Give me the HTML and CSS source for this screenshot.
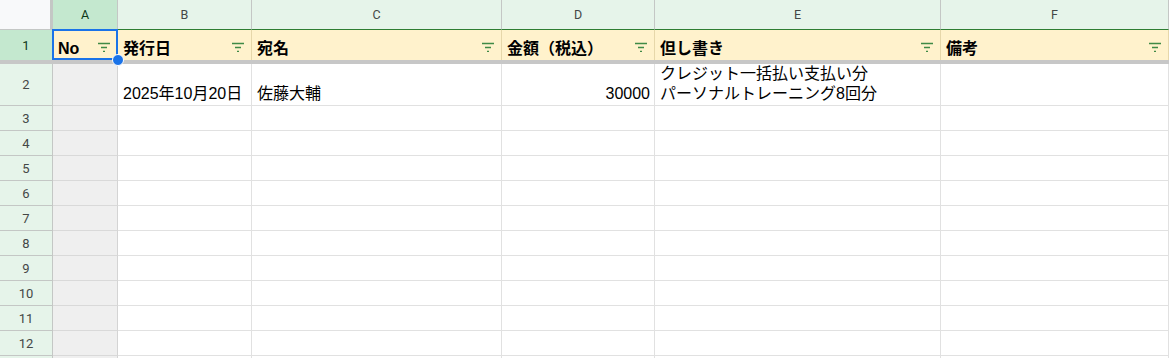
FILE: index.html
```html
<!DOCTYPE html>
<html lang="ja">
<head>
    <meta charset="UTF-8">
    <meta name="viewport" content="width=device-width, initial-scale=1.0">
    <title>領収書リスト</title>
    <link rel="stylesheet" href="styles.css">
</head>
<body>
    <div class="sheet">
        <!-- 列見出し -->
        <div class="corner"></div>
        <div class="col-head selected">A</div>
        <div class="col-head">B</div>
        <div class="col-head">C</div>
        <div class="col-head">D</div>
        <div class="col-head">E</div>
        <div class="col-head">F</div>

        <!-- 1行目: 見出し行（フィルタ付き） -->
        <div class="row-head selected">1</div>
        <div class="title-cell">No <svg class="filter" viewBox="0 0 12 10"><rect x="0" y="0.75" width="12" height="1.5"/><rect x="3" y="4.75" width="6" height="1.5"/><rect x="5" y="8.75" width="2" height="1.5"/></svg></div>
        <div class="title-cell">発行日 <svg class="filter" viewBox="0 0 12 10"><rect x="0" y="0.75" width="12" height="1.5"/><rect x="3" y="4.75" width="6" height="1.5"/><rect x="5" y="8.75" width="2" height="1.5"/></svg></div>
        <div class="title-cell">宛名 <svg class="filter" viewBox="0 0 12 10"><rect x="0" y="0.75" width="12" height="1.5"/><rect x="3" y="4.75" width="6" height="1.5"/><rect x="5" y="8.75" width="2" height="1.5"/></svg></div>
        <div class="title-cell">金額（税込） <svg class="filter" viewBox="0 0 12 10"><rect x="0" y="0.75" width="12" height="1.5"/><rect x="3" y="4.75" width="6" height="1.5"/><rect x="5" y="8.75" width="2" height="1.5"/></svg></div>
        <div class="title-cell">但し書き <svg class="filter" viewBox="0 0 12 10"><rect x="0" y="0.75" width="12" height="1.5"/><rect x="3" y="4.75" width="6" height="1.5"/><rect x="5" y="8.75" width="2" height="1.5"/></svg></div>
        <div class="title-cell">備考 <svg class="filter" viewBox="0 0 12 10"><rect x="0" y="0.75" width="12" height="1.5"/><rect x="3" y="4.75" width="6" height="1.5"/><rect x="5" y="8.75" width="2" height="1.5"/></svg></div>

        <!-- 固定行の区切り -->
        <div class="freeze-bar"></div>

        <!-- 2行目: データ -->
        <div class="row-head">2</div>
        <div class="cell grey"></div>
        <div class="cell">2025年10月20日</div>
        <div class="cell">佐藤大輔</div>
        <div class="cell num">30000</div>
        <div class="cell">クレジット一括払い支払い分<br>パーソナルトレーニング8回分</div>
        <div class="cell"></div>
    </div>

    <!-- 選択中のセル A1 -->
    <div class="selection"><span class="handle"></span></div>

    <script>
        // 空の行 3〜12 と、画面下で切れる13行目を作る
        const sheet = document.querySelector('.sheet');
        for (let r = 3; r <= 13; r++) {
            let html = '<div class="row-head">' + (r < 13 ? r : '') + '</div><div class="cell grey"></div>';
            for (let c = 0; c < 5; c++) {
                html += '<div class="cell"></div>';
            }
            sheet.insertAdjacentHTML('beforeend', html);
        }
    </script>
</body>
</html>
```

FILE: styles.css
```css
body {
    margin: 0;
    background-color: #ffffff;
    overflow: hidden;
    font-family: "Liberation Sans", Arial, "Noto Sans CJK JP", sans-serif;
}

.sheet {
    display: grid;
    grid-template-columns: 53px 65px 134px 250px 153px 286px 1fr;
    grid-template-rows: 30px 30px 4px 42px;
    grid-auto-rows: 25px;
    height: 100vh;
    overflow: hidden;
}

.sheet > div {
    box-sizing: border-box;
}

/* 列見出し */
.corner {
    background-color: #f8f9fa;
    border-right: 3px solid #c4c7c5;
    border-bottom: 1px solid #c4c7c5;
}

.col-head {
    display: flex;
    justify-content: center;
    align-items: center;
    font-family: Roboto, "Liberation Sans", sans-serif;
    font-size: 12.5px;
    color: #444746;
    background-color: #e6f4ea;
    border-right: 1px solid #c4c7c5;
    border-bottom: 1px solid #2e7d32;
}

.col-head.selected {
    background-color: #c4e8cf;
    color: #0d3818;
}

/* 行見出し */
.row-head {
    display: flex;
    justify-content: center;
    align-items: center;
    font-family: Roboto, "Liberation Sans", sans-serif;
    font-size: 13px;
    color: #444746;
    background-color: #e6f4ea;
    border-right: 1px solid #c4c7c5;
    border-bottom: 1px solid #c4c7c5;
}

.row-head.selected {
    background-color: #c4e8cf;
    color: #0d3818;
    border-bottom: none;
}

/* 見出し行のセル */
.title-cell {
    display: flex;
    justify-content: space-between;
    align-items: flex-end;
    padding: 0 7px 1px 5px;
    font-size: 16px;
    line-height: 20px;
    font-weight: bold;
    color: #000000;
    background-color: #fff2cc;
    border-right: 1px solid #e6d7aa;
    white-space: nowrap;
}

.filter {
    width: 12px;
    height: 10px;
    margin-bottom: 7px;
    fill: #3f8a46;
    flex-shrink: 0;
}

.freeze-bar {
    grid-column: 1 / -1;
    background-color: #c7c7c7;
}

/* 通常のセル */
.cell {
    display: flex;
    align-items: flex-end;
    padding: 0 4px 1px 5px;
    font-size: 16px;
    line-height: 20px;
    color: #000000;
    border-right: 1px solid #e1e1e1;
    border-bottom: 1px solid #e1e1e1;
    white-space: nowrap;
}

.cell.grey {
    background-color: #efefef;
    border-right-color: #d4d4d4;
    border-bottom-color: #d9d9d9;
}

.cell.num {
    justify-content: flex-end;
}

/* 選択枠 */
.selection {
    position: absolute;
    left: 52px;
    top: 29px;
    width: 62px;
    height: 27px;
    border: 2px solid #1a73e8;
}

.handle {
    position: absolute;
    right: -8px;
    bottom: -8px;
    width: 10px;
    height: 10px;
    border-radius: 50%;
    background-color: #1a73e8;
    border: 1px solid #ffffff;
}
```
